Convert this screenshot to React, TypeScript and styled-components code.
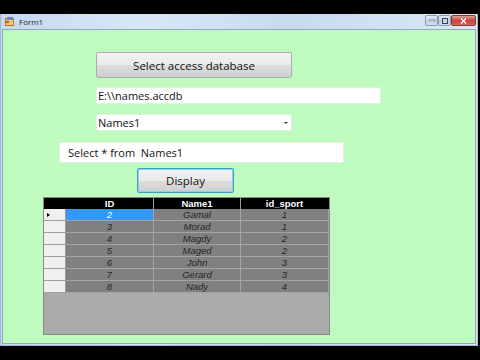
import styled, { createGlobalStyle } from "styled-components";

const GlobalStyle = createGlobalStyle`
    html, body {
        margin: 0;
        padding: 0;
        background: #000;
    }
`;

const Screen = styled.div`
    width: 480px;
    height: 360px;
    background: #000;
    display: flex;
    flex-direction: column;
    overflow: hidden;
`;

const Letterbox = styled.div<{ h: number }>`
    height: ${({ h }) => h}px;
    flex-shrink: 0;
    background: #000;
`;

const Window = styled.div`
    width: 478px;
    height: 332px;
    box-sizing: border-box;
    border: 1px solid #9fb9d6;
    border-top: none;
    background: linear-gradient(90deg, #c6d9ee 0%, #d9e7f5 30%, #c7dbef 60%, #dae7f4 100%);
    display: flex;
    flex-direction: column;
    padding: 0 1px 1px 1px;
`;

const TitleBar = styled.div`
    height: 15px;
    display: flex;
    align-items: center;
    padding-left: 3px;
    gap: 4px;
`;

const TitleText = styled.span`
    font-family: "Open Sans", "Noto Sans", sans-serif;
    font-size: 8px;
    color: #1e1e1e;
    flex: 1;
`;

const Controls = styled.div`
    display: flex;
    align-self: flex-start;
    margin-top: 1px;
`;

const CtrlButton = styled.div<{ wide?: boolean; danger?: boolean }>`
    width: ${({ wide }) => (wide ? 25 : 13)}px;
    height: 11px;
    border: 1px solid ${({ danger }) => (danger ? "#8c3b35" : "#8a9bb0")};
    border-radius: 2px;
    background: ${({ danger }) =>
        danger
            ? "linear-gradient(#e0a199, #c7453b 50%, #d4665a)"
            : "linear-gradient(#e4ecf5, #c3d2e3 50%, #d2deec)"};
    display: flex;
    align-items: center;
    justify-content: center;
    box-sizing: border-box;
`;

const Client = styled.div`
    flex: 1;
    background: #bffbbf;
    border: 1px solid #8fa8c0;
    display: flex;
    flex-direction: column;
    align-items: flex-start;
`;

const Placed = styled.div<{ left: number; top: number }>`
    margin-left: ${({ left }) => left}px;
    margin-top: ${({ top }) => top}px;
    display: flex;
`;

const WinButton = styled.div<{ w: number; h: number; focused?: boolean }>`
    width: ${({ w }) => w}px;
    height: ${({ h }) => h}px;
    box-sizing: border-box;
    border: 1px solid ${({ focused }) => (focused ? "#3c9fc9" : "#adadad")};
    box-shadow: ${({ focused }) => (focused ? "inset 0 0 0 1px #8ad0ef" : "none")};
    border-radius: 2px;
    background: linear-gradient(#f2f2f2 0%, #ebebeb 50%, #dddddd 52%, #cfcfcf 100%);
    display: flex;
    align-items: center;
    justify-content: center;
    font-family: "Open Sans", "Noto Sans", sans-serif;
    font-size: 11.5px;
    color: #111;
`;

const TextBox = styled.div<{ w: number; h: number; pad: number }>`
    width: ${({ w }) => w}px;
    height: ${({ h }) => h}px;
    box-sizing: border-box;
    background: #fff;
    border: 1px solid #e3efe3;
    padding-left: ${({ pad }) => pad}px;
    display: flex;
    align-items: center;
    font-family: "Open Sans", "Noto Sans", sans-serif;
    font-size: 11px;
    color: #111;
    justify-content: space-between;
    padding-right: 3px;
`;

const Arrow = styled.span`
    width: 0;
    height: 0;
    border-left: 2px solid transparent;
    border-right: 2px solid transparent;
    border-top: 2px solid #333;
`;

const Grid = styled.div`
    width: 287px;
    height: 138px;
    box-sizing: border-box;
    background: #ababab;
    border: 1px solid #7f8f7f;
    display: grid;
    grid-template-columns: 22px 88px 87px 88px;
    grid-auto-rows: 12px;
    grid-template-rows: 11px;
    align-content: start;
`;

const HeadCell = styled.div<{ corner?: boolean }>`
    background: #000;
    color: #fff;
    font-family: "Liberation Sans", Arial, sans-serif;
    font-weight: bold;
    font-size: 9.5px;
    display: flex;
    align-items: center;
    justify-content: center;
    border-right: 1px solid ${({ corner }) => (corner ? "#000" : "#9a9a9a")};
    box-sizing: border-box;
`;

const RowHead = styled.div`
    background: #f0f0f0;
    border-right: 1px solid #9a9a9a;
    border-bottom: 1px solid #a0a0a0;
    box-sizing: border-box;
    display: flex;
    align-items: center;
    padding-left: 3px;
`;

const Pointer = styled.span`
    width: 0;
    height: 0;
    border-top: 2.5px solid transparent;
    border-bottom: 2.5px solid transparent;
    border-left: 3px solid #000;
`;

const Cell = styled.div<{ selected?: boolean }>`
    background: ${({ selected }) => (selected ? "#3399ff" : "#808080")};
    color: ${({ selected }) => (selected ? "#fff" : "#262626")};
    font-family: "Liberation Sans", Arial, sans-serif;
    font-style: italic;
    font-size: 9.5px;
    display: flex;
    align-items: center;
    justify-content: center;
    border-right: 1px solid #a3a3a3;
    border-bottom: 1px solid #a3a3a3;
    box-sizing: border-box;
`;

const rows = [
    ["2", "Gamal", "1"],
    ["3", "Morad", "1"],
    ["4", "Magdy", "2"],
    ["5", "Maged", "2"],
    ["6", "John", "3"],
    ["7", "Gerard", "3"],
    ["8", "Nady", "4"],
];

export default function App() {
    return (
        <>
            <GlobalStyle />
            <Screen>
                <Letterbox h={14} />
                <Window>
                    <TitleBar>
                        <svg width="10" height="9" viewBox="0 0 10 9">
                            <rect x="0.5" y="1.5" width="8" height="7" fill="#f2c868" stroke="#b07a2a" />
                            <rect x="2" y="0" width="6" height="3" fill="#5a8fd0" />
                            <rect x="1" y="4" width="3" height="2" fill="#d24a3a" />
                        </svg>
                        <TitleText>Form1</TitleText>
                        <Controls>
                            <CtrlButton>
                                <svg width="6" height="3"><rect x="0" y="1" width="6" height="2" fill="#fff" stroke="#445" strokeWidth="0.6" /></svg>
                            </CtrlButton>
                            <CtrlButton>
                                <svg width="6" height="6"><rect x="0.5" y="0.5" width="5" height="5" fill="none" stroke="#445" strokeWidth="1" /></svg>
                            </CtrlButton>
                            <CtrlButton wide danger>
                                <svg width="7" height="6" viewBox="0 0 7 6">
                                    <path d="M1 0.5 L6 5.5 M6 0.5 L1 5.5" stroke="#fff" strokeWidth="1.4" />
                                </svg>
                            </CtrlButton>
                        </Controls>
                    </TitleBar>
                    <Client>
                        <Placed left={93} top={22}>
                            <WinButton w={196} h={26}>Select access database</WinButton>
                        </Placed>
                        <Placed left={93} top={9}>
                            <TextBox w={285} h={17} pad={1}>E:\\names.accdb</TextBox>
                        </Placed>
                        <Placed left={93} top={10}>
                            <TextBox w={196} h={17} pad={1}>
                                Names1
                                <Arrow />
                            </TextBox>
                        </Placed>
                        <Placed left={56} top={11}>
                            <TextBox w={285} h={21} pad={8}>Select * from&nbsp;&nbsp;Names1</TextBox>
                        </Placed>
                        <Placed left={134} top={5}>
                            <WinButton w={97} h={25} focused>Display</WinButton>
                        </Placed>
                        <Placed left={40} top={4}>
                            <Grid>
                                <HeadCell corner />
                                <HeadCell>ID</HeadCell>
                                <HeadCell>Name1</HeadCell>
                                <HeadCell corner>id_sport</HeadCell>
                                {rows.map((r, i) => (
                                    <>
                                        <RowHead key={`h${i}`}>{i === 0 && <Pointer />}</RowHead>
                                        <Cell key={`a${i}`} selected={i === 0}>{r[0]}</Cell>
                                        <Cell key={`b${i}`}>{r[1]}</Cell>
                                        <Cell key={`c${i}`}>{r[2]}</Cell>
                                    </>
                                ))}
                            </Grid>
                        </Placed>
                    </Client>
                </Window>
            </Screen>
        </>
    );
}
